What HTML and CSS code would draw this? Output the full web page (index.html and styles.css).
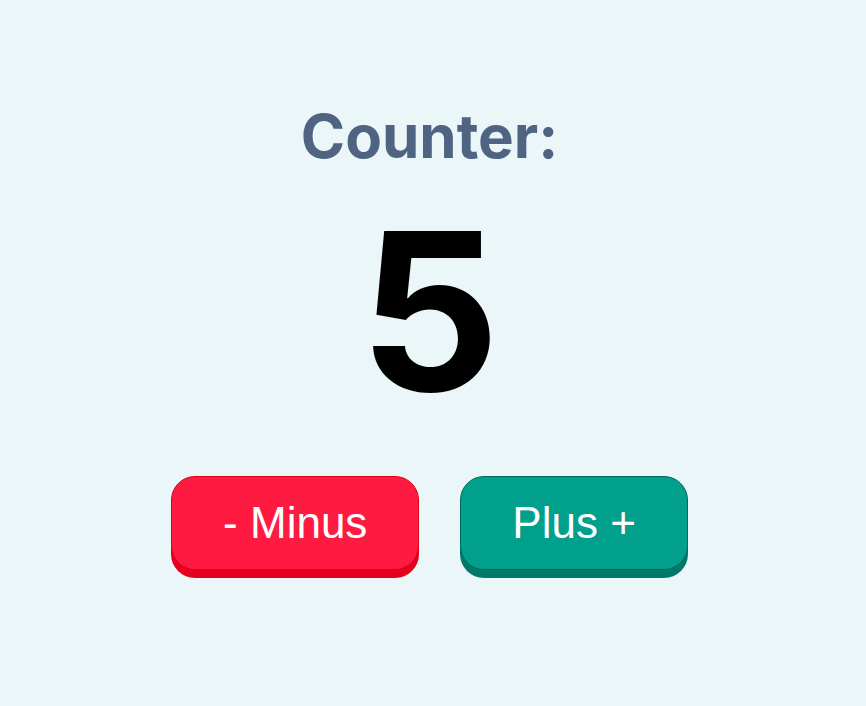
FILE: index.html
```html
<!DOCTYPE html>
<html>
<head>
<meta charset="utf-8">
<link rel="stylesheet" href="styles.css">
</head>
<body>
<main class="counter">
  <h1 class="counter-title">Counter:</h1>
  <div class="counter-value">5</div>
  <div class="counter-actions">
    <button class="btn btn-minus">- Minus</button>
    <button class="btn btn-plus">Plus +</button>
  </div>
</main>
</body>
</html>
```

FILE: styles.css
```css
html, body {
  margin: 0;
  padding: 0;
}
body {
  background: #ebf6f8;
  width: 866px;
  height: 706px;
  font-family: Inter, "Liberation Sans", sans-serif;
}
.counter {
  display: flex;
  flex-direction: column;
  align-items: center;
  padding-top: 100px;
  padding-right: 7px;
}
.counter-title {
  margin: 0;
  font-size: 60px;
  font-weight: 700;
  line-height: 72px;
  color: #4e6482;
}
.counter-value {
  margin-top: 39px;
  font-size: 220px;
  font-weight: 700;
  line-height: 200px;
  color: #000;
}
.counter-actions {
  display: flex;
  gap: 41px;
  margin-top: 65px;
}
.btn {
  font-family: "Liberation Sans", Arial, sans-serif;
  font-size: 44px;
  color: #fff;
  height: 94px;
  border-radius: 24px;
  border: 1.5px solid;
  padding: 0 51px;
  cursor: pointer;
}
.btn-minus {
  background: #ff1a41;
  border-color: #d9001c;
  box-shadow: 0 8px 0 #e6001e;
}
.btn-plus {
  background: #00a08c;
  border-color: #00695c;
  box-shadow: 0 8px 0 #00796b;
}
```
